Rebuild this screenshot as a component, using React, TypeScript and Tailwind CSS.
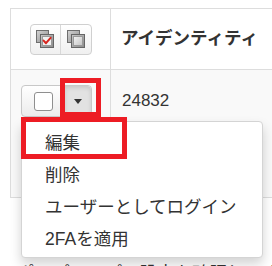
import React from "react"

const CheckAllIcon = () => (
  <svg width="20" height="20" viewBox="0 0 20 20">
    <defs>
      <linearGradient id="ca-back" x1="0" y1="0" x2="1" y2="1">
        <stop offset="0" stopColor="#d4d4d4" />
        <stop offset="1" stopColor="#8e8e8e" />
      </linearGradient>
      <linearGradient id="ca-front" x1="0" y1="0" x2="1" y2="1">
        <stop offset="0" stopColor="#c9c9c9" />
        <stop offset="1" stopColor="#8a8a8a" />
      </linearGradient>
    </defs>
    <rect x="1.5" y="1.5" width="12" height="12" fill="url(#ca-back)" stroke="#6e6e6e" />
    <rect x="5.5" y="5.5" width="13" height="13" fill="url(#ca-front)" stroke="#666" />
    <rect x="7.5" y="7.5" width="9" height="9" fill="#f2f2f2" stroke="#9a9a9a" />
    <path d="M8.6 11.6 L11 14.2 L15.6 8.8" fill="none" stroke="#d8261f" strokeWidth="2" strokeLinecap="round" strokeLinejoin="round" />
  </svg>
)

const UncheckAllIcon = () => (
  <svg width="20" height="20" viewBox="0 0 20 20">
    <defs>
      <linearGradient id="ua-back" x1="0" y1="0" x2="1" y2="1">
        <stop offset="0" stopColor="#d4d4d4" />
        <stop offset="1" stopColor="#8e8e8e" />
      </linearGradient>
      <linearGradient id="ua-front" x1="0" y1="0" x2="1" y2="1">
        <stop offset="0" stopColor="#c9c9c9" />
        <stop offset="1" stopColor="#8a8a8a" />
      </linearGradient>
      <linearGradient id="ua-inner" x1="0" y1="0" x2="1" y2="1">
        <stop offset="0" stopColor="#f4f4f4" />
        <stop offset="1" stopColor="#c4c4c4" />
      </linearGradient>
    </defs>
    <rect x="1.5" y="1.5" width="12" height="12" fill="url(#ua-back)" stroke="#6e6e6e" />
    <rect x="5.5" y="5.5" width="13" height="13" fill="url(#ua-front)" stroke="#666" />
    <rect x="7.5" y="7.5" width="9" height="9" fill="url(#ua-inner)" stroke="#9a9a9a" />
  </svg>
)

const menuItems = ["編集", "削除", "ユーザーとしてログイン", "2FAを適用"]

export default function App() {
  return (
    <div
      className="relative w-[272px] h-[266px] overflow-hidden bg-white text-[#333] text-[17.5px]"
      style={{ fontFamily: '"Liberation Sans", "Noto Sans CJK JP", sans-serif' }}
    >
      <div className="ml-[10px] mt-[8px] w-[420px] border-t border-l border-[#ddd]">
        {/* header */}
        <div className="flex h-[61px] border-b border-[#ddd]">
          <div className="w-[100px] border-r border-[#ddd] flex items-center justify-center">
            <div className="flex h-[31px] rounded-[4px] border border-[#d0d0d0] bg-gradient-to-b from-white to-[#f0f0f0]">
              <div className="w-[30px] flex items-center justify-center border-r border-[#d8d8d8]">
                <CheckAllIcon />
              </div>
              <div className="w-[30px] flex items-center justify-center">
                <UncheckAllIcon />
              </div>
            </div>
          </div>
          <div className="flex items-center pl-[10px] font-bold leading-none">アイデンティティ</div>
        </div>
        {/* row */}
        <div className="flex h-[128px] border-b border-[#ddd] bg-[#f9f9f9]">
          <div className="w-[100px] border-r border-[#ddd] pl-[10px] pt-[15px]">
            <div className="flex h-[32px] w-[71px] rounded-[4px] border border-[#c8c8c8] bg-gradient-to-b from-white to-[#ececec]">
              <div className="w-[43px] flex items-center justify-center border-r border-[#c8c8c8]">
                <div className="w-[19px] h-[19px] rounded-[3px] border border-[#8f8f8f] bg-white" />
              </div>
              <div className="flex-1 flex items-center justify-center bg-[#e2e2e2] rounded-r-[4px] shadow-[inset_0_2px_4px_rgba(0,0,0,0.12)]">
                <div className="w-0 h-0 border-t-[5px] border-t-[#333] border-x-[4.5px] border-x-transparent" />
              </div>
            </div>
          </div>
          <div className="pl-[11px] pt-[19px] leading-[24px] text-[17px]">24832</div>
        </div>
      </div>

      <div className="ml-[17px] mt-[63px] whitespace-nowrap leading-[24px]">ポップアップの設定を確認してください</div>

      {/* dropdown menu */}
      <div className="absolute left-[21px] top-[121px] w-[242px] h-[137px] rounded-[4px] border border-[#d4d4d4] bg-white shadow-[0_6px_12px_rgba(0,0,0,0.175)] pt-[5px]">
        {menuItems.map((item) => (
          <div key={item} className="h-[32px] flex items-center pl-[23px] whitespace-nowrap">
            {item}
          </div>
        ))}
      </div>

      {/* highlight boxes */}
      <div className="absolute left-[60px] top-[78px] w-[41px] h-[39px] border-[5px] border-[#ed1c24]" />
      <div className="absolute left-[21px] top-[117px] w-[106px] h-[42px] border-[5px] border-[#ed1c24]" />
    </div>
  )
}
